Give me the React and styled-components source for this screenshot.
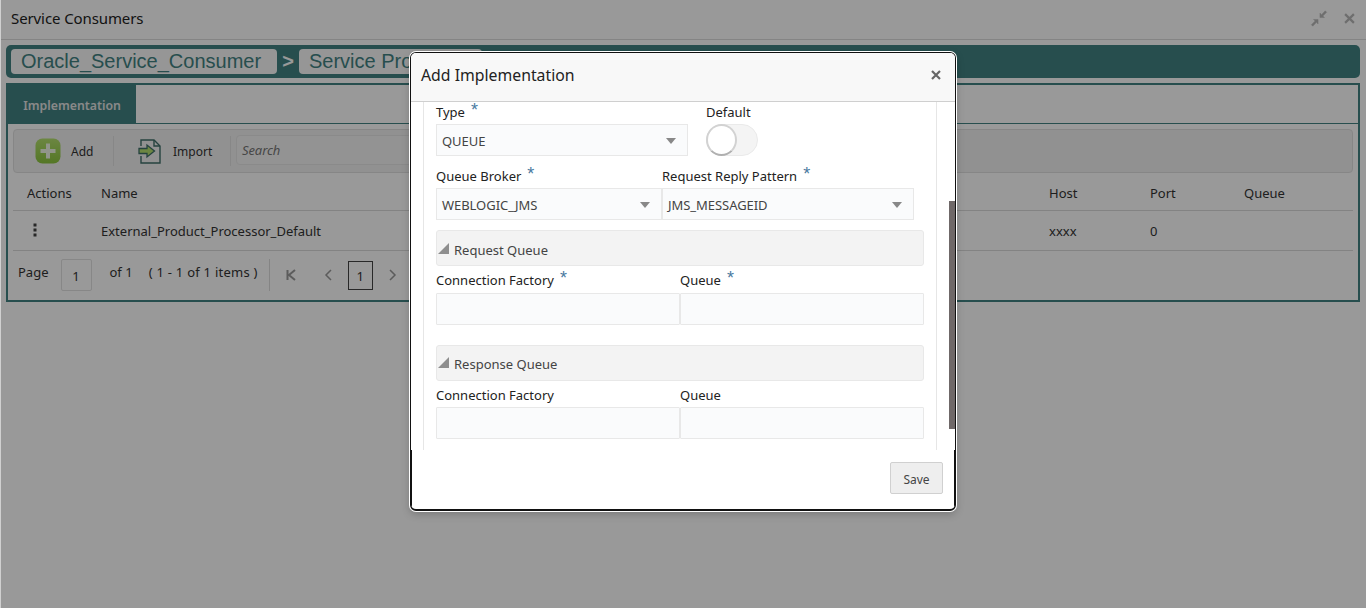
import React from "react";
import styled, { createGlobalStyle } from "styled-components";

const Global = createGlobalStyle`
  html, body { margin: 0; height: 100%; overflow: hidden; background: #fff; }
  body { font-family: "Noto Sans", "Open Sans", sans-serif; font-size: 13px; color: #2c2c2c; }
  * { box-sizing: border-box; }
`;

const TEAL = "#428282";

const Page = styled.div`
  width: 1366px; height: 608px; position: relative; overflow: hidden;
  border-left: 1px solid #d0d0d0;
`;
const TitleBar = styled.header`
  height: 40px; display: flex; align-items: center; justify-content: space-between;
  padding: 0 11px 3px 10px; border-bottom: 1px solid #dcdcdc;
`;
const PageTitle = styled.h1`
  margin: 0; font-size: 15px; font-weight: 400; color: #222; letter-spacing: -.1px;
`;
const WindowIcons = styled.div`display: flex; align-items: center; gap: 16px;`;
const Breadcrumbs = styled.nav`
  margin: 5px 5px 0 5px; height: 33px; width: 1354px; background: ${TEAL}; border-radius: 5px;
  display: flex; align-items: center; padding: 0 5px;
`;
const Crumb = styled.span`
  height: 25px; width: ${p => p.$w}px; background: #fafafa; border-radius: 4px;
  font: 20px/24px "Liberation Sans", Arial, sans-serif; color: ${TEAL}; padding-left: 10px;
  white-space: nowrap; overflow: hidden;
`;
const CrumbSep = styled.span`
  width: 22px; text-align: center; color: #fff; font: bold 20px/25px "Liberation Sans", Arial, sans-serif;
`;
const Panel = styled.section`
  margin: 5px 0 0 5px; width: 1354px; height: 219px; border: 2px solid ${TEAL};
`;
const TabStrip = styled.div`height: 39px; border-bottom: 1px solid ${TEAL};`;
const Tab = styled.div`
  width: 128px; height: 38px; background: ${TEAL}; color: #e4e4e4; font-size: 12.3px; font-weight: 600;
  display: flex; align-items: center; justify-content: center; padding-top: 2px;
`;
const Toolbar = styled.div`
  margin: 5px 5px 0 5px; height: 44px; background: #f2f2f2; border: 1px solid #e0e0e0; border-radius: 4px;
  display: flex; align-items: center; padding-left: 21px;
`;
const ToolButton = styled.div`display: flex; align-items: center; gap: ${p => p.$gap}px; width: ${p => p.$w}px; color: #333; font-size: 12px;`;
const ToolDivider = styled.span`width: 1px; height: 30px; background: #e2e2e2; margin-right: ${p => p.$mr}px;`;
const Search = styled.div`
  width: 320px; height: 30px; margin: 0 0 3px 5px; background: #f6f6f6; border: 1px solid #e6e6e6; border-radius: 4px;
  font-style: italic; color: #777; font-size: 13px; padding: 5px 5px 0; letter-spacing: -.1px;
`;
const GridRow = styled.div`
  margin: 0 5px; height: ${p => p.$h}px; display: grid; grid-template-columns: 74px 948px 101px 94px 1fr;
  padding: ${p => p.$pt}px 0 0 14px; align-items: center; border-bottom: 1px solid #dadada; font-size: 13px; color: #333;
`;
const Dots = styled.span`display: flex; padding-left: 6px; transform: translateY(-1px);`;
const Pager = styled.div`
  display: flex; align-items: center; height: 48px; padding-left: 10px; font-size: 13px; color: #333;
`;
const PagerText = styled.span`
  margin-left: ${p => p.$ml || 0}px; transform: translateY(-3px); letter-spacing: ${p => p.$ls || 0}px; white-space: nowrap;
`;
const PageInput = styled.span`
  width: ${p => p.$w}px; height: ${p => p.$h}px; margin: ${p => p.$m};
  border: 1px solid ${p => p.$dark ? "#444" : "#e2e2e2"}; display: flex; align-items: center; justify-content: center; padding-top: 2px;
  border-radius: ${p => p.$dark ? 0 : 2}px;
`;
const PagerDivider = styled.span`width: 1px; height: 32px; background: #ddd; margin: 0 14px 0 11px;`;
const PagerArrow = styled.span`
  display: flex; justify-content: center; color: #888; width: 14px; margin-left: ${p => p.$ml || 0}px;
`;

const Overlay = styled.div`position: absolute; inset: 0; background: rgba(0,0,0,.4);`;
const Modal = styled.div`
  position: absolute; left: 409px; top: 52px; width: 546px; height: 459px; background: #fff;
  border: 1px solid #111; border-bottom-width: 2px; border-radius: 6px;
  box-shadow: 0 0 0 1px #fff, 0 3px 9px rgba(0,0,0,.22);
  display: flex; flex-direction: column; overflow: hidden;
`;
const ModalHead = styled.div`
  height: 49px; flex: none; background: #f8f8f8; border-bottom: 1px solid #cfcfcf;
  display: flex; align-items: center; justify-content: space-between; padding: 0 14px 4px 10px;
`;
const ModalTitle = styled.h2`margin: 0; font-size: 15.8px; font-weight: 400; color: #222;`;
const CloseX = styled.span`display: flex;`;
const Scroller = styled.div`
  height: 348px; flex: none; margin: 0 18px 0 12px; border-left: 1px solid #e6e6e6; border-right: 1px solid #e6e6e6;
  padding: 0 0 0 12px; overflow: hidden;
`;
const ScrollThumb = styled.div`
  position: absolute; right: 0; top: 148px; width: 6px; height: 228px; background: #6f6868;
`;
const Row = styled.div`
  display: grid; grid-template-columns: ${p => p.$cols}; margin: ${p => p.$mt || 0}px 0 ${p => p.$mb || 0}px;
`;
const Field = styled.div`display: flex; flex-direction: column;`;
const Label = styled.label`
  height: 24px; font-size: 13px; color: #222; display: flex; align-items: center; white-space: nowrap;
  padding-bottom: ${p => p.$up || 0}px;
`;
const Req = styled.span`
  color: #4a7aa0; font: 18px/1 "Liberation Sans", Arial, sans-serif; margin-left: 6px; transform: translateY(-2px);
`;
const Select = styled.div`
  height: 32px; background: #fafbfc; border: 1px solid #e8e8e8; display: flex; align-items: center;
  justify-content: space-between; padding: 2px 11px 0 5px; font-size: 13px; color: #444; letter-spacing: -.05px;
  width: ${p => p.$w ? `${p.$w}px` : "auto"};
`;
const Caret = styled.span`
  width: 0; height: 0; border-left: 5px solid transparent; border-right: 5px solid transparent; border-top: 6px solid #888;
`;
const Input = styled.div`height: 32px; background: #fafbfc; border: 1px solid #e8e8e8; border-radius: 1px;`;
const Toggle = styled.div`
  width: 52px; height: 32px; border-radius: 16px; background: #f4f4f4; border: 1px solid #eaeaea; position: relative;
`;
const Knob = styled.span`
  position: absolute; left: -1px; top: -1px; width: 31px; height: 32px; border-radius: 50%; background: #fff;
  border: 2px solid #d2d2d2; border-bottom-color: #b0b0b0;
`;
const SectionHead = styled.div`
  width: 488px; height: 36px; background: #f3f3f3; border: 1px solid #e8e8e8; border-radius: 3px;
  display: flex; align-items: center; gap: 5px; font-size: 13px; color: #444; padding: ${p => p.$pt}px 0 0 1px;
  margin-top: ${p => p.$mt}px; margin-bottom: ${p => p.$mb}px;
`;
const Triangle = styled.span`
  width: 0; height: 0; border-bottom: 11px solid #8e8e8e; border-left: 11px solid transparent; transform: translateY(-1px);
`;
const ModalFoot = styled.div`
  flex: 1; display: flex; justify-content: flex-end; align-items: flex-start; padding: 12px 11px 0 0;
  border-left: 1px solid #111; border-right: 1px solid #111;
`;
const SaveButton = styled.button`
  width: 53px; height: 32px; background: #eee; border: 1px solid #d0d0d0; border-radius: 2px;
  font: 12px "Noto Sans", sans-serif; color: #444; padding: 2px 0 0;
`;

const X = ({ size = 10, color = "#666", w = 2 }) => (
  <svg width={size} height={size} viewBox="0 0 10 10"><path d="M1 1 9 9M9 1 1 9" stroke={color} strokeWidth={w} /></svg>
);
const Compress = () => (
  <svg width="18" height="17" viewBox="0 0 18 18" fill="#b8b8b8" stroke="#b8b8b8" strokeWidth=".5">
    <path d="M10 8V3.2l1.7 1.7L15.6.9l1.5 1.5-4 3.9L14.8 8z" />
    <path d="M8 10v4.8l-1.7-1.7-3.9 4-1.5-1.5 4-3.9L3.2 10z" />
  </svg>
);
const DotsIcon = () => (
  <svg width="4" height="14" viewBox="0 0 4 14" fill="#444">
    <rect x="0.5" y="0.5" width="3" height="3" /><rect x="0.5" y="5.5" width="3" height="3" /><rect x="0.5" y="10.5" width="3" height="3" />
  </svg>
);
const Chevron = ({ left }) => (
  <svg width="9" height="12" viewBox="0 0 9 12" fill="none">
    <path d={left ? "M7 1 2 6l5 5" : "M2 1l5 5-5 5"} stroke="#999" strokeWidth="1.5" />
  </svg>
);
const FirstPage = () => (
  <svg width="10" height="12" viewBox="0 0 10 12" fill="none" stroke="#999" strokeWidth="2">
    <path d="M1.5 1v10M9 1 3 6l6 5" />
  </svg>
);
const AddIcon = () => (
  <svg width="26" height="26" viewBox="0 0 26 26">
    <defs>
      <linearGradient id="g" x1="0" y1="0" x2="0" y2="1">
        <stop offset="0" stopColor="#b4e06e" /><stop offset="1" stopColor="#8cc63f" />
      </linearGradient>
    </defs>
    <rect x="0.5" y="0.5" width="25" height="25" rx="7" fill="url(#g)" />
    <path d="M13 5.5v15M5.5 13h15" stroke="#f2f9e6" strokeWidth="4" />
  </svg>
);
const ImportIcon = () => (
  <svg width="25" height="26" viewBox="0 0 25 26" fill="none">
    <path d="M3 8V2h13l6 6v17H3v-7" stroke="#3f6f6a" strokeWidth="1.4" />
    <path d="M16 2v6h6" stroke="#3f6f6a" strokeWidth="1.4" />
    <path d="M1 10.5h8V7l7.5 6L9 19v-3.5H1z" fill="#b4e06e" stroke="#3f6f6a" strokeWidth="1.3" />
  </svg>
);

const Required = ({ children, up }) => <Label $up={up}>{children}<Req>*</Req></Label>;

export default function App() {
  return (
    <Page>
      <Global />
      <TitleBar>
        <PageTitle>Service Consumers</PageTitle>
        <WindowIcons><Compress /><X size={11} color="#b8b8b8" /></WindowIcons>
      </TitleBar>
      <Breadcrumbs>
        <Crumb $w={266}>Oracle_Service_Consumer</Crumb>
        <CrumbSep>&gt;</CrumbSep>
        <Crumb $w={183}>Service Providers</Crumb>
      </Breadcrumbs>
      <Panel>
        <TabStrip><Tab>Implementation</Tab></TabStrip>
        <Toolbar>
          <ToolButton $w={78} $gap={10}><AddIcon /> Add</ToolButton>
          <ToolDivider $mr={24} />
          <ToolButton $w={92} $gap={10}><ImportIcon /> Import</ToolButton>
          <ToolDivider $mr={0} />
          <Search>Search</Search>
        </Toolbar>
        <GridRow $h={38} $pt={2}><span>Actions</span><span>Name</span><span>Host</span><span>Port</span><span>Queue</span></GridRow>
        <GridRow $h={40} $pt={0}><Dots><DotsIcon /></Dots><span>External_Product_Processor_Default</span><span>xxxx</span><span>0</span><span /></GridRow>
        <Pager>
          <PagerText>Page</PagerText>
          <PageInput $w={31} $h={32} $m="0 18px 0 12px">1</PageInput>
          <PagerText>of 1</PagerText>
          <PagerText $ml={16} $ls={0.25}>( 1 - 1 of 1 items )</PagerText>
          <PagerDivider />
          <PagerArrow><FirstPage /></PagerArrow>
          <PagerArrow $ml={24}><Chevron left /></PagerArrow>
          <PageInput $dark $w={25} $h={29} $m="0 0 0 12px">1</PageInput>
          <PagerArrow $ml={13}><Chevron /></PagerArrow>
        </Pager>
      </Panel>
      <Overlay />
      <Modal>
        <ModalHead>
          <ModalTitle>Add Implementation</ModalTitle>
          <CloseX><X size={10} color="#666" w={2.2} /></CloseX>
        </ModalHead>
        <Scroller>
          <Row $cols="270px 60px" $mt={-2} $mb={8}>
            <Field>
              <Required>Type</Required>
              <Select $w={252}>QUEUE<Caret /></Select>
            </Field>
            <Field>
              <Label>Default</Label>
              <Toggle><Knob /></Toggle>
            </Field>
          </Row>
          <Row $cols="226px 252px">
            <Field><Required>Queue Broker</Required><Select>WEBLOGIC_JMS<Caret /></Select></Field>
            <Field><Required>Request Reply Pattern</Required><Select>JMS_MESSAGEID<Caret /></Select></Field>
          </Row>
          <SectionHead $pt={3} $mt={10} $mb={3}><Triangle />Request Queue</SectionHead>
          <Row $cols="244px 244px">
            <Field><Required up={2}>Connection Factory</Required><Input /></Field>
            <Field><Required up={2}>Queue</Required><Input /></Field>
          </Row>
          <SectionHead $pt={1} $mt={20} $mb={2}><Triangle />Response Queue</SectionHead>
          <Row $cols="244px 244px">
            <Field><Label>Connection Factory</Label><Input /></Field>
            <Field><Label>Queue</Label><Input /></Field>
          </Row>
        </Scroller>
        <ScrollThumb />
        <ModalFoot><SaveButton>Save</SaveButton></ModalFoot>
      </Modal>
    </Page>
  );
}
